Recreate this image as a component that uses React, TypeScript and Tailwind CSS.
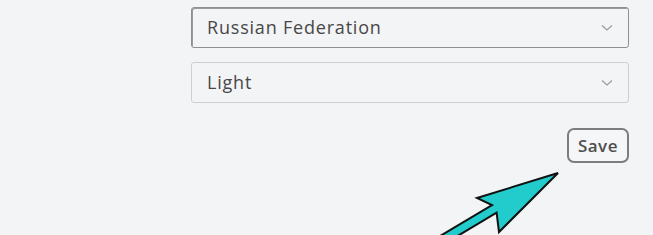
import React from 'react';

function Chevron() {
    return (
        <svg width="12" height="8" viewBox="0 0 12 8" className="text-[#9a9a9a]">
            <path d="M1 1.5 L6 6 L11 1.5" fill="none" stroke="currentColor" strokeWidth="1.2" />
        </svg>
    );
}

function SelectBox({ value, focused }: { value: string; focused?: boolean }) {
    return (
        <div
            className={
                focused
                    ? 'flex h-[41px] items-center justify-between rounded-[3px] border border-[#8f8f8f] bg-[#f3f4f6] pl-[15px] pr-[15px] shadow-[inset_1px_1px_0_#9a9a9a]'
                    : 'flex h-[41px] items-center justify-between rounded-[3px] border border-[#cfcfcf] bg-[#f3f4f6] pl-[15px] pr-[15px]'
            }
        >
            <span className="text-[18px] tracking-[0.8px] text-[#474747]">{value}</span>
            <Chevron />
        </div>
    );
}

export default function App() {
    return (
        <div
            className="relative h-[235px] w-[653px] overflow-hidden bg-[#f3f4f6]"
            style={{ fontFamily: '"Open Sans", Lato, sans-serif' }}
        >
            <div className="ml-[191px] flex w-[438px] flex-col gap-[14px] pt-[7px]">
                <SelectBox value="Russian Federation" focused />
                <SelectBox value="Light" />
                <div className="mt-[11px] flex justify-end">
                    <button className="h-[35px] rounded-[7px] border-2 border-[#7d7d7d] bg-[#f5f6f7] px-[9px] text-[17px] font-semibold tracking-[0.5px] text-[#4e4e4e]">
                        Save
                    </button>
                </div>
            </div>
            <svg className="absolute left-0 top-0" width="653" height="235" viewBox="0 0 653 235">
                <polygon
                    points="558,173 477,198 492,205 420,248 424,256 496.6,212.7 499,232"
                    fill="#22cccc"
                    stroke="#111"
                    strokeWidth="2"
                    strokeLinejoin="miter"
                />
            </svg>
        </div>
    );
}
